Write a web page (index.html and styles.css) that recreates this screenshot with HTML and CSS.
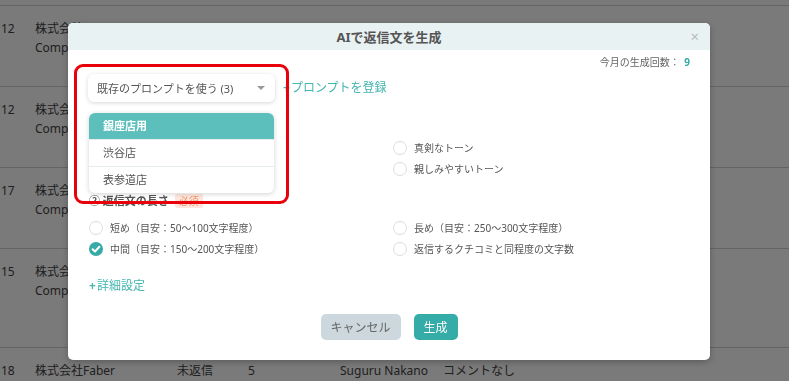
FILE: index.html
```html
<!DOCTYPE html>
<html lang="ja">
  <head>
    <meta charset="UTF-8" />
    <meta name="viewport" content="width=device-width, initial-scale=1.0" />
    <title>AIで返信文を生成</title>
    <link rel="stylesheet" href="styles.css">
  </head>
  <body>
    <div class="table">
      <div class="row">
        <span class="cell num">12</span>
        <div class="cell company">
          <div>株式会社Faber</div>
          <div>Company</div>
        </div>
      </div>
      <div class="row">
        <span class="cell num">12</span>
        <div class="cell company">
          <div>株式会社Faber</div>
          <div>Company</div>
        </div>
      </div>
      <div class="row">
        <span class="cell num">17</span>
        <div class="cell company">
          <div>株式会社Faber</div>
          <div>Company</div>
        </div>
      </div>
      <div class="row tall">
        <span class="cell num">15</span>
        <div class="cell company">
          <div>株式会社Faber</div>
          <div>Company</div>
        </div>
      </div>
      <div class="row last">
        <span class="cell num">18</span>
        <span class="cell company">株式会社Faber</span>
        <span class="cell status">未返信</span>
        <span class="cell rating">5</span>
        <span class="cell author">Suguru Nakano</span>
        <span class="cell comment">コメントなし</span>
      </div>
    </div>

    <div class="backdrop"></div>

    <div class="modal">
      <div class="modal-header">
        <h2 class="modal-title">AIで返信文を生成</h2>
        <span class="modal-close">×</span>
      </div>
      <div class="modal-body">
        <div class="usage">今月の生成回数： <b>9</b></div>

        <div class="prompt-row">
          <div class="select">
            <span>既存のプロンプトを使う (3)</span>
            <span class="caret"></span>
          </div>
          <a class="link"><span class="plus">+</span>プロンプトを登録</a>
        </div>

        <div class="section">
          <div class="section-title">① 返信文のトーン <span class="required">必須</span></div>
          <div class="options">
            <label class="option"><span class="radio"></span>丁寧なトーン</label>
            <label class="option"><span class="radio"></span>真剣なトーン</label>
            <label class="option"><span class="radio"></span>カジュアルなトーン</label>
            <label class="option"><span class="radio"></span>親しみやすいトーン</label>
          </div>
        </div>

        <div class="section">
          <div class="section-title">② 返信文の長さ <span class="required">必須</span></div>
          <div class="options">
            <label class="option"><span class="radio"></span>短め（目安：50〜100文字程度）</label>
            <label class="option"><span class="radio"></span>長め（目安：250〜300文字程度）</label>
            <label class="option">
              <span class="radio checked">
                <svg width="14" height="14" viewBox="0 0 14 14"><path d="M3.6 7.2 L6 9.5 L10.4 4.8" fill="none" stroke="#fff" stroke-width="2" stroke-linecap="round" stroke-linejoin="round"/></svg>
              </span>中間（目安：150〜200文字程度）
            </label>
            <label class="option"><span class="radio"></span>返信するクチコミと同程度の文字数</label>
          </div>
        </div>

        <a class="link detail"><span class="plus">+</span>詳細設定</a>

        <div class="actions">
          <button class="btn cancel">キャンセル</button>
          <button class="btn primary">生成</button>
        </div>
      </div>

      <ul class="dropdown">
        <li class="active">銀座店用</li>
        <li>渋谷店</li>
        <li>表参道店</li>
      </ul>
    </div>

    <div class="highlight"></div>
  </body>
</html>
```

FILE: styles.css
```css
* {
  box-sizing: border-box;
}

html,
body {
  height: 381px;
  overflow: hidden;
}

body {
  margin: 0;
  font-family: "Noto Sans", "Noto Sans CJK JP", sans-serif;
  color: #444;
  background: #fff;
}

.table {
  padding-top: 5px;
}

.row {
  display: grid;
  grid-template-columns: 35px 142px 71px 92px 103px 1fr;
  height: 81px;
  border-top: 1px solid #cdd2d6;
  padding-top: 13px;
  font-size: 12px;
  line-height: 19px;
}

.row.tall {
  height: 99px;
}

.row.last {
  height: 34px;
}

.num {
  padding-left: 1px;
}

.backdrop {
  position: fixed;
  inset: 0;
  background: rgba(0, 0, 0, 0.52);
}

.modal {
  position: absolute;
  left: 68px;
  top: 23px;
  width: 642px;
  height: 337px;
  background: #fff;
  border-radius: 5px;
  box-shadow: 0 2px 6px rgba(0, 0, 0, 0.25);
}

.modal-header {
  position: relative;
  height: 27px;
  background: #e9f2f3;
  border-radius: 5px 5px 0 0;
  display: flex;
  align-items: center;
  justify-content: center;
}

.modal-title {
  margin: 0;
  font-size: 13px;
  font-weight: 700;
  color: #555;
}

.modal-close {
  position: absolute;
  right: 11px;
  top: 3px;
  font-size: 15px;
  color: #b5bcc0;
}

.modal-body {
  padding: 5px 20px 20px 20px;
}

.usage {
  text-align: right;
  font-size: 10px;
  line-height: 14px;
  color: #666;
}

.usage b {
  color: #36aaa6;
  margin-left: 2px;
}

.prompt-row {
  display: flex;
  align-items: center;
  gap: 8px;
  margin-top: 5px;
}

.select {
  display: flex;
  align-items: center;
  justify-content: space-between;
  width: 187px;
  height: 28px;
  padding: 0 10px 0 9px;
  background: #fff;
  border-radius: 6px;
  box-shadow: 0 1px 4px rgba(0, 0, 0, 0.16);
  font-size: 11px;
  color: #555;
}

.caret {
  width: 0;
  height: 0;
  border-left: 4px solid transparent;
  border-right: 4px solid transparent;
  border-top: 4px solid #999;
}

.link {
  color: #45b5b0;
  font-size: 12px;
  line-height: 18px;
}

.plus {
  font-weight: 700;
  margin-right: 1px;
}

.section {
  margin-top: 11px;
}

.section + .section {
  margin-top: 14px;
}

.section-title {
  font-size: 11px;
  font-weight: 700;
  line-height: 16px;
  color: #555;
  padding-left: 1px;
}

.required {
  display: inline-block;
  margin-left: 3px;
  padding: 0 4px;
  background: #fde6dc;
  color: #f3936a;
  font-size: 10px;
  line-height: 14px;
  border-radius: 2px;
  font-weight: 400;
}

.options {
  display: grid;
  grid-template-columns: 304px 1fr;
  margin-top: 8px;
}

.option {
  display: flex;
  align-items: center;
  gap: 7px;
  height: 21px;
  font-size: 10px;
  color: #555;
  padding-left: 1px;
}

.radio {
  width: 14px;
  height: 14px;
  border-radius: 50%;
  border: 1px solid #d6dee3;
  background: #fff;
  flex: none;
}

.radio.checked {
  border: none;
  background: #36aaa6;
}

.radio svg {
  display: block;
}

.detail {
  display: block;
  margin-top: 18px;
  padding-left: 1px;
}

.actions {
  display: flex;
  justify-content: center;
  gap: 13px;
  margin-top: 19px;
}

.btn {
  height: 26px;
  border: none;
  border-radius: 5px;
  font-family: inherit;
  font-size: 12px;
  padding: 0;
}

.cancel {
  width: 80px;
  background: #cdd8de;
  color: #666;
}

.primary {
  width: 44px;
  background: #36aca8;
  color: #fff;
}

.dropdown {
  position: absolute;
  left: 21px;
  top: 90px;
  width: 185px;
  margin: 0;
  padding: 0;
  list-style: none;
  background: #fff;
  border-radius: 6px;
  box-shadow: 0 1px 5px rgba(0, 0, 0, 0.18);
  overflow: hidden;
}

.dropdown li {
  height: 27px;
  line-height: 25px;
  padding-left: 14px;
  font-size: 11px;
  color: #555;
  border-top: 1px solid #e6ebee;
}

.dropdown li.active {
  border-top: none;
  height: 26px;
  line-height: 26px;
  background: #5cbfbb;
  color: #fff;
  font-weight: 700;
}

.highlight {
  position: absolute;
  left: 74px;
  top: 64px;
  width: 215px;
  height: 140px;
  border: 3px solid #e8000b;
  border-radius: 9px;
}
```
